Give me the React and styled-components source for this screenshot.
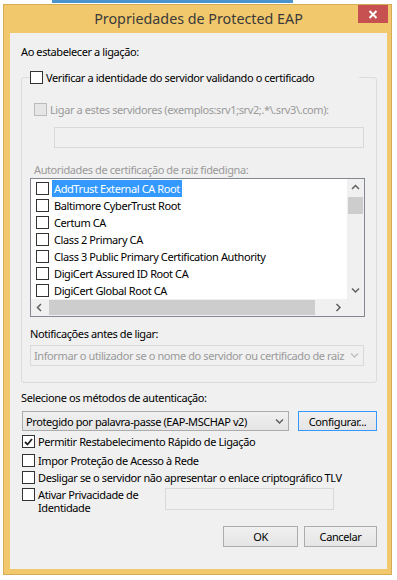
import React from "react";
import styled, { createGlobalStyle } from "styled-components";

const GlobalStyle = createGlobalStyle`
  html, body {
    margin: 0;
    padding: 0;
    background: #ffffff;
  }
  body {
    font-family: "Noto Sans", "Open Sans", sans-serif;
    font-size: 11px;
    letter-spacing: -0.4px;
    color: #000;
  }
  * {
    box-sizing: border-box;
  }
`;

const Desktop = styled.div`
  width: 397px;
  height: 580px;
  overflow: hidden;
  background: #fff;
`;

const BackWindowEdge = styled.div`
  margin-left: 52px;
  width: 241px;
  height: 3px;
  background: #4b93cc;
`;

const Window = styled.div`
  margin: 1px 0 0 3px;
  width: 389px;
  height: 571px;
  background: #f1c86c;
  border: 1px solid #d6ab55;
  padding: 0 4px 5px 6px;
  display: flex;
  flex-direction: column;
`;

const TitleBar = styled.div`
  height: 28px;
  display: grid;
  grid-template-columns: 31px 1fr 31px;
  align-items: center;
`;

const Title = styled.div`
  grid-column: 2;
  text-align: center;
  font-size: 14.3px;
  letter-spacing: 0;
  line-height: 20px;
  color: #3a3a3a;
`;

const CloseButton = styled.div`
  grid-column: 3;
  align-self: start;
  width: 30px;
  height: 18px;
  margin-left: 2px;
  background: #c75050;
  display: flex;
  align-items: center;
  justify-content: center;
`;

const Client = styled.div`
  flex: 1;
  background: #f0f0f0;
  padding: 11px 10px 0 11px;
  display: flex;
  flex-direction: column;
`;

const Label = styled.div`
  height: 15px;
  line-height: 15px;
  white-space: nowrap;
  color: ${(p) => (p.$disabled ? "#9a9a9a" : "#000")};
  margin-top: ${(p) => p.$mt || 0}px;
  margin-left: ${(p) => p.$ml || 0}px;
`;

const GroupBox = styled.fieldset`
  margin: 11px 0 0 0;
  padding: 0 12px 16px 8px;
  border: 1px solid #dcdcdc;
  border-radius: 3px;
  min-width: 0;
  display: flex;
  flex-direction: column;
`;

const Legend = styled.legend`
  padding: 0;
  width: 329px;
  height: 15px;
  display: flex;
  align-items: center;
`;

const CheckRow = styled.div`
  display: flex;
  align-items: center;
  gap: 3px;
  height: 15px;
  line-height: 15px;
  white-space: nowrap;
  margin-top: ${(p) => p.$mt || 0}px;
  margin-left: ${(p) => p.$ml || 0}px;
  color: ${(p) => (p.$disabled ? "#9a9a9a" : "#000")};
`;

const Box = styled.span`
  flex: none;
  width: 13px;
  height: 13px;
  border: 1px solid ${(p) => (p.$disabled ? "#bcbcbc" : "#333333")};
  background: ${(p) => (p.$disabled ? "#e6e6e6" : "#ffffff")};
  display: flex;
  align-items: center;
  justify-content: center;
`;

const TextBox = styled.div`
  height: ${(p) => p.$h || 21}px;
  width: ${(p) => (p.$w ? p.$w + "px" : "auto")};
  margin-top: ${(p) => p.$mt || 0}px;
  margin-left: ${(p) => p.$ml || 0}px;
  border: 1px solid #d9d9d9;
  background: #f0f0f0;
  flex: none;
`;

const ListBox = styled.div`
  margin-top: 1px;
  margin-right: -1px;
  height: 139px;
  border: 1px solid #828790;
  background: #fff;
  display: grid;
  grid-template-columns: 1fr 17px;
  grid-template-rows: 1fr 17px;
`;

const Items = styled.div`
  padding-top: 1px;
  overflow: hidden;
`;

const Item = styled.div`
  height: 17px;
  display: flex;
  align-items: center;
  padding-left: 5px;
  white-space: nowrap;
`;

const ItemText = styled.span`
  margin-left: 3px;
  padding: 0 2px;
  height: 17px;
  line-height: 17px;
  background: ${(p) => (p.$selected ? "#3399ff" : "transparent")};
  color: ${(p) => (p.$selected ? "#fff" : "#000")};
`;

const VScroll = styled.div`
  background: #f0f0f0;
  display: grid;
  grid-template-rows: 17px 1fr 17px;
`;

const HScroll = styled.div`
  background: #f0f0f0;
  display: grid;
  grid-template-columns: 17px 1fr 17px;
`;

const Corner = styled.div`
  background: #f0f0f0;
`;

const Arrow = styled.div`
  display: flex;
  align-items: center;
  justify-content: center;
`;

const Track = styled.div`
  display: flex;
  flex-direction: ${(p) => (p.$horizontal ? "row" : "column")};
`;

const Thumb = styled.div`
  background: #cdcdcd;
  ${(p) =>
    p.$horizontal
      ? `width: 266px; height: 15px; margin: 1px 0 0 1px;`
      : `height: 17px; width: 15px; margin: 1px 0 0 1px;`}
`;

const Combo = styled.div`
  height: ${(p) => p.$h || 21}px;
  width: ${(p) => (p.$w ? p.$w + "px" : "auto")};
  margin-top: ${(p) => p.$mt || 0}px;
  margin-left: ${(p) => p.$ml || 0}px;
  flex: none;
  display: flex;
  align-items: center;
  padding-left: 3px;
  border: 1px solid ${(p) => (p.$disabled ? "#d9d9d9" : "#acacac")};
  background: ${(p) =>
    p.$disabled ? "#f0f0f0" : "linear-gradient(#f0f0f0, #e5e5e5)"};
  color: ${(p) => (p.$disabled ? "#9a9a9a" : "#000")};
  white-space: nowrap;
  overflow: hidden;
`;

const ComboText = styled.span`
  flex: 1;
  overflow: hidden;
  line-height: 15px;
`;

const ComboArrow = styled.span`
  flex: none;
  width: 17px;
  display: flex;
  justify-content: center;
`;

const MethodRow = styled.div`
  margin-top: 6px;
  display: flex;
  gap: 9px;
`;

const Button = styled.div`
  flex: none;
  width: ${(p) => p.$w}px;
  height: ${(p) => p.$h || 21}px;
  border: 1px solid ${(p) => (p.$default ? "#3399ff" : "#acacac")};
  background: linear-gradient(#f0f0f0, #e5e5e5);
  display: flex;
  align-items: center;
  justify-content: center;
  line-height: 15px;
`;

const PrivacyRow = styled.div`
  margin-top: 3px;
  display: flex;
  align-items: flex-start;
`;

const PrivacyLabel = styled.div`
  flex: 0 0 144px;
  display: flex;
  gap: 3px;
  padding-left: 1px;
`;

const WrapText = styled.div`
  width: 110px;
  line-height: 12.5px;
  margin-top: 1px;
`;

const Footer = styled.div`
  margin-top: 12px;
  display: flex;
  justify-content: flex-end;
  gap: 6px;
`;

const Check = ({ checked, disabled }) => (
  <Box $disabled={disabled}>
    {checked && (
      <svg width="9" height="8" viewBox="0 0 9 8">
        <polyline
          points="1,4 3.5,6.5 8,1"
          fill="none"
          stroke="#222"
          strokeWidth="1.8"
        />
      </svg>
    )}
  </Box>
);

const Chevron = ({ dir, color = "#606060" }) => {
  const pts = {
    up: "1,5 4.5,1.5 8,5",
    down: "1,1.5 4.5,5 8,1.5",
    left: "5,1 1.5,4.5 5,8",
    right: "1.5,1 5,4.5 1.5,8",
  }[dir];
  const wide = dir === "up" || dir === "down";
  return (
    <svg
      width={wide ? 9 : 7}
      height={wide ? 7 : 9}
      viewBox={wide ? "0 0 9 7" : "0 0 7 9"}
    >
      <polyline points={pts} fill="none" stroke={color} strokeWidth="1.5" />
    </svg>
  );
};

const authorities = [
  "AddTrust External CA Root",
  "Baltimore CyberTrust Root",
  "Certum CA",
  "Class 2 Primary CA",
  "Class 3 Public Primary Certification Authority",
  "DigiCert Assured ID Root CA",
  "DigiCert Global Root CA",
];

const App = () => {
  return (
    <Desktop>
      <GlobalStyle />
      <BackWindowEdge />
      <Window>
        <TitleBar>
          <Title>Propriedades de Protected EAP</Title>
          <CloseButton>
            <svg width="10" height="9" viewBox="0 0 10 9">
              <path d="M1.5 1 L8.5 8 M8.5 1 L1.5 8" stroke="#fff" strokeWidth="2" />
            </svg>
          </CloseButton>
        </TitleBar>
        <Client>
          <Label>Ao estabelecer a ligação:</Label>
          <GroupBox>
            <Legend>
              <CheckRow>
                <Check />
                Verificar a identidade do servidor validando o certificado
              </CheckRow>
            </Legend>
            <CheckRow $mt={17} $ml={4} $disabled>
              <Check disabled />
              Ligar a estes servidores (exemplos:srv1;srv2;.*\.srv3\.com):
            </CheckRow>
            <TextBox $mt={10} $ml={24} />
            <Label $mt={14} $ml={4} $disabled>
              Autoridades de certificação de raiz fidedigna:
            </Label>
            <ListBox>
              <Items>
                {authorities.map((name, i) => (
                  <Item key={name}>
                    <Check />
                    <ItemText $selected={i === 0}>{name}</ItemText>
                  </Item>
                ))}
              </Items>
              <VScroll>
                <Arrow>
                  <Chevron dir="up" />
                </Arrow>
                <Track>
                  <Thumb />
                </Track>
                <Arrow>
                  <Chevron dir="down" />
                </Arrow>
              </VScroll>
              <HScroll>
                <Arrow>
                  <Chevron dir="left" />
                </Arrow>
                <Track $horizontal>
                  <Thumb $horizontal />
                </Track>
                <Arrow>
                  <Chevron dir="right" />
                </Arrow>
              </HScroll>
              <Corner />
            </ListBox>
            <Label $mt={9}>Notificações antes de ligar:</Label>
            <Combo $mt={4} $disabled>
              <ComboText>
                Informar o utilizador se o nome do servidor ou certificado de raiz
              </ComboText>
              <ComboArrow>
                <Chevron dir="down" color="#c0c0c0" />
              </ComboArrow>
            </Combo>
          </GroupBox>
          <Label $mt={7}>Selecione os métodos de autenticação:</Label>
          <MethodRow>
            <Combo $w={267} $h={20} $ml={1}>
              <ComboText>Protegido por palavra-passe (EAP-MSCHAP v2)</ComboText>
              <ComboArrow>
                <Chevron dir="down" />
              </ComboArrow>
            </Combo>
            <Button $w={79} $h={20} $default>
              Configurar...
            </Button>
          </MethodRow>
          <CheckRow $mt={3} $ml={1}>
            <Check checked />
            Permitir Restabelecimento Rápido de Ligação
          </CheckRow>
          <CheckRow $mt={4} $ml={1}>
            <Check />
            Impor Proteção de Acesso à Rede
          </CheckRow>
          <CheckRow $mt={2} $ml={1}>
            <Check />
            Desligar se o servidor não apresentar o enlace criptográfico TLV
          </CheckRow>
          <PrivacyRow>
            <PrivacyLabel>
              <Check />
              <WrapText>Ativar Privacidade de Identidade</WrapText>
            </PrivacyLabel>
            <TextBox $w={169} $h={22} />
          </PrivacyRow>
          <Footer>
            <Button $w={75}>OK</Button>
            <Button $w={73}>Cancelar</Button>
          </Footer>
        </Client>
      </Window>
    </Desktop>
  );
};

export default App;
